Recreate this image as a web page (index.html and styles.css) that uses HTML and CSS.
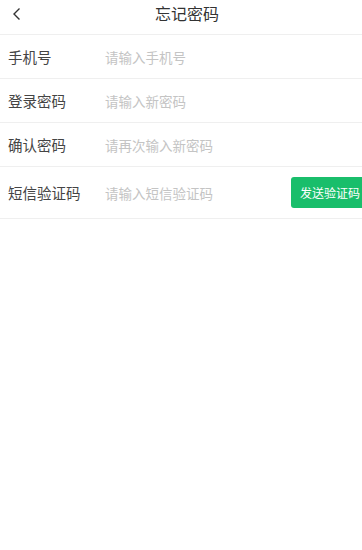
FILE: index.html
```html
<!DOCTYPE html>
<html lang="zh">
<head>
<meta charset="utf-8">
<link rel="stylesheet" href="styles.css">
</head>
<body>
<div class="page">
  <header class="nav">
    <span class="back"><svg width="10" height="14" viewBox="0 0 10 14"><path d="M7.5 1.5 L2 7 L7.5 12.5" fill="none" stroke="#333" stroke-width="1.4"/></svg></span>
    <h1 class="title">忘记密码</h1>
  </header>
  <div class="form">
    <div class="row"><span class="label">手机号</span><span class="ph">请输入手机号</span></div>
    <div class="row"><span class="label">登录密码</span><span class="ph">请输入新密码</span></div>
    <div class="row"><span class="label">确认密码</span><span class="ph">请再次输入新密码</span></div>
    <div class="row row-code"><span class="label">短信验证码</span><span class="ph">请输入短信验证码</span><button class="send">发送验证码</button></div>
  </div>
</div>
</body>
</html>
```
FILE: styles.css
```css
html, body { margin: 0; padding: 0; background: #fff; }
body { font-family: "Noto Sans CJK SC", "Noto Sans", sans-serif; color: #333; overflow: hidden; }
.page { width: 362px; }
.nav { height: 35px; display: flex; align-items: flex-start; justify-content: center; position: relative; border-bottom: 1px solid #efefef; box-sizing: border-box; padding: 3px 0 0 12px; }
.back { position: absolute; left: 12px; top: 7px; display: flex; }
.title { margin: 0; font-size: 16px; font-weight: normal; color: #333; line-height: 20px; }
.row { height: 44px; display: flex; align-items: center; border-bottom: 1px solid #efefef; box-sizing: border-box; padding-left: 8px; }
.row-code { height: 52px; }
.label { width: 97px; font-size: 14.5px; color: #444; flex: none; }
.ph { font-size: 13.5px; color: #c4c4c4; flex: 1; }
.send { flex: none; width: 78px; height: 31px; margin-right: -7px; border: none; border-radius: 3px; background: #19be6b; color: #fff; font-family: inherit; font-size: 12px; padding: 0 0 0 9px; text-align: left; }
```
